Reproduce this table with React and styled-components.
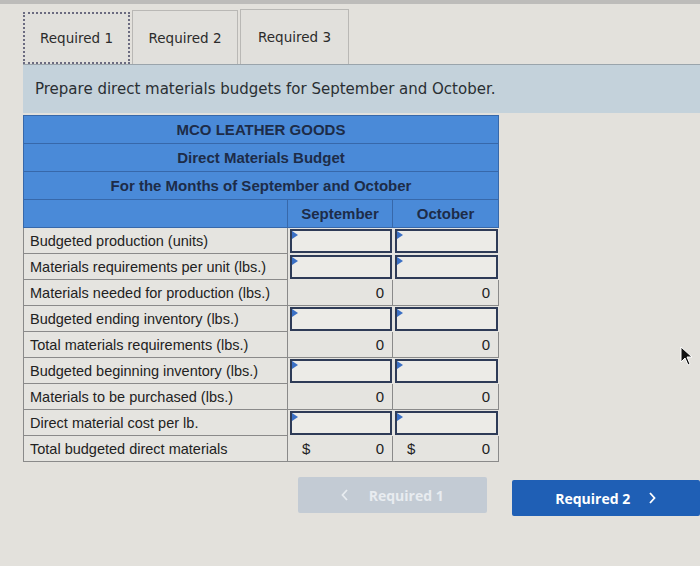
import React from "react";
import styled, { createGlobalStyle } from "styled-components";

const GlobalStyle = createGlobalStyle`
  html, body {
    margin: 0;
    padding: 0;
    background: #e3e1dc;
  }
  body {
    width: 700px;
    height: 566px;
    overflow: hidden;
    position: relative;
  }
`;

const TopStripe = styled.div`
  height: 4px;
  background: #bdbcba;
`;

const Page = styled.div`
  padding-left: 23px;
  padding-top: 5px;
`;

const TabRow = styled.div`
  display: flex;
  gap: 2px;
  height: 55px;
`;

const Tab = styled.div`
  width: ${({ w }) => w}px;
  box-sizing: border-box;
  display: flex;
  align-items: center;
  justify-content: center;
  font-family: "DejaVu Sans", Verdana, sans-serif;
  font-size: 13.5px;
  color: #2b2b2b;
  background: #e1e0dc;
  border: ${({ active }) =>
    active ? "2px dotted #6b6b80" : "1px solid #b9b8b5"};
  border-bottom: ${({ active }) => (active ? "2px dotted #6b6b80" : "none")};
  margin-top: ${({ offset }) => offset}px;
`;

const Instructions = styled.div`
  height: 48px;
  background: #c4d2db;
  border-top: 1px solid #9aa4ab;
  display: flex;
  align-items: center;
  padding-left: 12px;
  font-family: "DejaVu Sans", Verdana, sans-serif;
  font-size: 15px;
  color: #2a2f33;
`;

const Table = styled.div`
  margin-top: 2px;
  width: 476px;
  font-family: "Liberation Sans", Arial, sans-serif;
`;

const TitleRow = styled.div`
  height: 27px;
  background: #4a8ad8;
  border: 1px solid #3768aa;
  border-top: ${({ first }) => (first ? "1px solid #3768aa" : "none")};
  display: flex;
  align-items: center;
  justify-content: center;
  font-size: 15px;
  font-weight: bold;
  color: #1d2c48;
`;

const Grid = styled.div`
  display: grid;
  grid-template-columns: 265px 105px 106px;
  height: ${({ h }) => h}px;
`;

const HeadCell = styled.div`
  background: #4a8ad8;
  border-bottom: 1px solid #3768aa;
  border-right: 1px solid #3768aa;
  border-left: ${({ first }) => (first ? "1px solid #3768aa" : "none")};
  display: flex;
  align-items: center;
  justify-content: center;
  font-size: 15px;
  font-weight: bold;
  color: #1d2c48;
`;

const Label = styled.div`
  background: #e5e4e0;
  border-left: 1px solid #8a8a8a;
  border-right: 1px solid #8a8a8a;
  border-bottom: 1px solid #8a8a8a;
  display: flex;
  align-items: center;
  padding-left: 6px;
  font-size: 14.5px;
  color: #222;
`;

const ValueCell = styled.div`
  background: #e5e4e0;
  border-right: 1px solid #8a8a8a;
  border-bottom: 1px solid #8a8a8a;
  display: flex;
  align-items: center;
  justify-content: space-between;
  padding: 0 8px 0 14px;
  font-size: 15px;
  color: #222;
`;

const InputCell = styled.div`
  background: #e5e4e0;
  padding: 1px 1px 1px 2px;
  display: flex;
`;

const InputBox = styled.div`
  flex: 1;
  position: relative;
  background: #ecebe7;
  border: 2px solid #2e3b57;
  &::before {
    content: "";
    position: absolute;
    top: 0;
    left: 0;
    border-top: 4px solid transparent;
    border-bottom: 4px solid transparent;
    border-left: 6px solid #3a6fc4;
  }
`;

const ButtonRow = styled.div`
  display: flex;
  gap: 25px;
  padding-left: 275px;
  margin-top: 15px;
`;

const NavButton = styled.div`
  width: 190px;
  height: 36px;
  border-radius: 2px;
  background: ${({ primary }) => (primary ? "#1f5fb5" : "#c3cbd4")};
  color: ${({ primary }) => (primary ? "#ffffff" : "#e8ecf0")};
  margin-top: ${({ primary }) => (primary ? 3 : 0)}px;
  display: flex;
  align-items: center;
  justify-content: center;
  gap: ${({ primary }) => (primary ? 18 : 20)}px;
  font-family: "Open Sans", sans-serif;
  font-size: 14px;
  font-weight: bold;
`;

const Cursor = styled.svg`
  position: absolute;
  left: 680px;
  top: 346px;
`;

const Chevron = ({ left, color }) => (
  <svg width="8" height="12" viewBox="0 0 8 12">
    <path
      d={left ? "M6 1 L1.5 6 L6 11" : "M2 1 L6.5 6 L2 11"}
      fill="none"
      stroke={color}
      strokeWidth="1.8"
    />
  </svg>
);

const rows = [
  { label: "Budgeted production (units)", input: true },
  { label: "Materials requirements per unit (lbs.)", input: true },
  { label: "Materials needed for production (lbs.)", value: "0" },
  { label: "Budgeted ending inventory (lbs.)", input: true },
  { label: "Total materials requirements (lbs.)", value: "0" },
  { label: "Budgeted beginning inventory (lbs.)", input: true },
  { label: "Materials to be purchased (lbs.)", value: "0" },
  { label: "Direct material cost per lb.", input: true },
  { label: "Total budgeted direct materials", value: "0", dollar: true },
];

const renderValue = (row, key) =>
  row.input ? (
    <InputCell key={key}>
      <InputBox />
    </InputCell>
  ) : (
    <ValueCell key={key}>
      <span>{row.dollar ? "$" : ""}</span>
      <span>{row.value}</span>
    </ValueCell>
  );

export default function App() {
  return (
    <>
      <GlobalStyle />
      <TopStripe />
      <Page>
        <TabRow>
          <Tab w={107} active offset={3}>
            Required 1
          </Tab>
          <Tab w={106} offset={1}>
            Required 2
          </Tab>
          <Tab w={109} offset={0}>
            Required 3
          </Tab>
        </TabRow>
        <Instructions>
          Prepare direct materials budgets for September and October.
        </Instructions>
        <Table>
          <TitleRow first>MCO LEATHER GOODS</TitleRow>
          <TitleRow>Direct Materials Budget</TitleRow>
          <TitleRow>For the Months of September and October</TitleRow>
          <Grid h={28}>
            <HeadCell first />
            <HeadCell>September</HeadCell>
            <HeadCell>October</HeadCell>
          </Grid>
          {rows.map((row) => (
            <Grid h={26} key={row.label}>
              <Label>{row.label}</Label>
              {renderValue(row, "s")}
              {renderValue(row, "o")}
            </Grid>
          ))}
        </Table>
        <ButtonRow>
          <NavButton>
            <Chevron left color="#e8ecf0" />
            Required 1
          </NavButton>
          <NavButton primary>
            Required 2
            <Chevron color="#ffffff" />
          </NavButton>
        </ButtonRow>
      </Page>
      <Cursor width="14" height="20" viewBox="0 0 14 20">
        <path
          d="M1 1 L1 16 L5 12 L8 19 L10 18 L7 11 L12 11 Z"
          fill="#111"
          stroke="#fff"
          strokeWidth="1"
        />
      </Cursor>
    </>
  );
}
